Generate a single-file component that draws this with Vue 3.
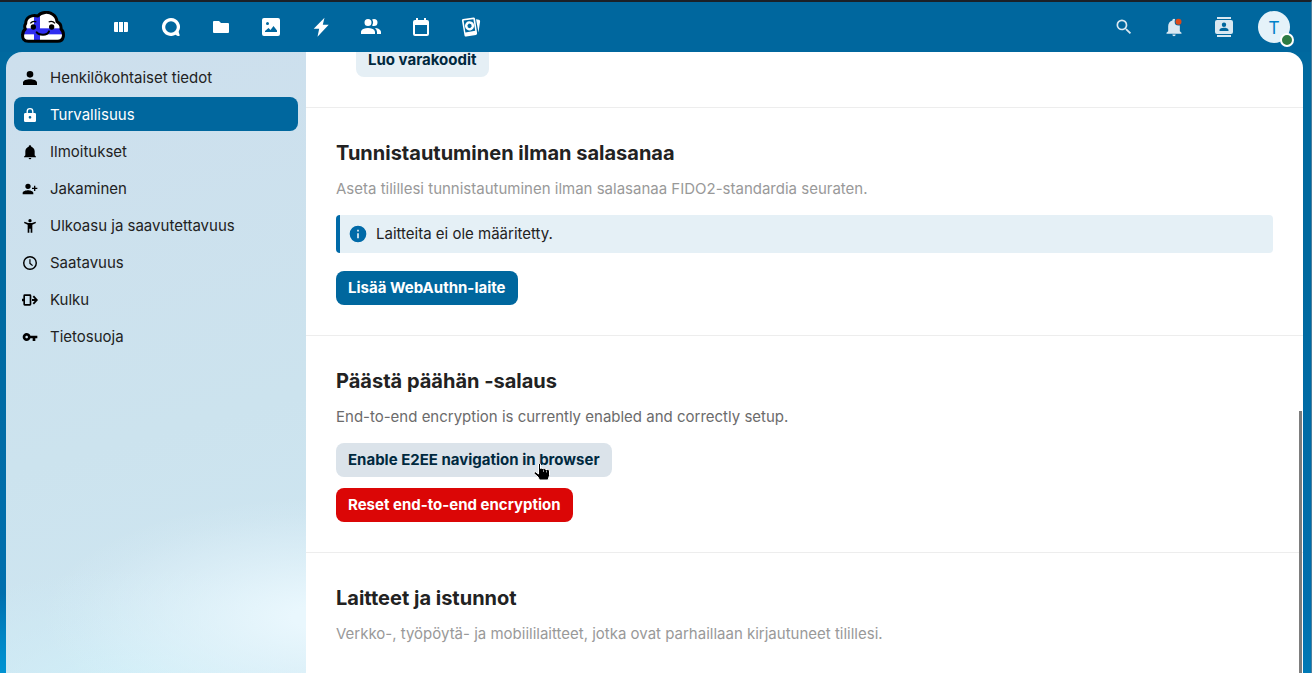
<template>
  <div class="page">
    <header class="header">
      <a href="#" class="logo" aria-label="Etusivu">
        <svg viewBox="0 0 132 96" width="44" height="32">
          <defs>
            <clipPath id="cloud-clip"><path :d="cloud" /></clipPath>
          </defs>
          <g clip-path="url(#cloud-clip)">
            <rect width="132" height="96" fill="#fff" />
            <rect x="39" width="18" height="96" fill="#2f2df0" />
            <rect y="52" width="132" height="18" fill="#2f2df0" />
          </g>
          <path :d="cloud" fill="none" stroke="#000" stroke-width="9" stroke-linejoin="round" />
          <circle cx="37" cy="48" r="8" />
          <circle cx="92" cy="48" r="8" />
          <path d="M28 37Q36 28 46 33M83 33Q94 28 102 37" fill="none" stroke="#000" stroke-width="4" />
          <path d="M47 64Q51 71 66 71Q80 71 84 61" fill="none" stroke="#000" stroke-width="6" stroke-linecap="round" />
        </svg>
      </a>

      <nav class="apps" aria-label="Sovellukset">
        <a v-for="app in apps" :key="app.name" href="#" class="app" :aria-label="app.name">
          <svg viewBox="0 0 24 24" width="24" height="24">
            <path :d="app.icon" fill="currentColor" fill-rule="evenodd" />
          </svg>
        </a>
      </nav>

      <div class="tools">
        <button class="tool" aria-label="Haku">
          <svg viewBox="0 0 24 24" width="20" height="20">
            <path fill="currentColor" d="M9.5,3A6.5,6.5 0 0,1 16,9.5C16,11.11 15.41,12.59 14.44,13.73L14.71,14H15.5L20.5,19L19,20.5L14,15.5V14.71L13.73,14.44C12.59,15.41 11.11,16 9.5,16A6.5,6.5 0 0,1 3,9.5A6.5,6.5 0 0,1 9.5,3M9.5,5C7,5 5,7 5,9.5C5,12 7,14 9.5,14C12,14 14,12 14,9.5C14,7 12,5 9.5,5Z" />
          </svg>
        </button>
        <button class="tool" aria-label="Ilmoitukset">
          <svg viewBox="0 0 24 24" width="20" height="20">
            <path fill="currentColor" :d="bell" />
            <circle cx="17.4" cy="5.6" r="4.6" fill="#00679e" />
            <circle cx="17.4" cy="5.6" r="3.6" fill="#dd4a1a" />
          </svg>
        </button>
        <button class="tool" aria-label="Yhteystiedot">
          <svg viewBox="0 0 24 24" width="24" height="24">
            <path fill="currentColor" fill-rule="evenodd" d="M5 2H19V4H5ZM5 20H19V22H5ZM5 5H19A2 2 0 0 1 21 7V17A2 2 0 0 1 19 19H5A2 2 0 0 1 3 17V7A2 2 0 0 1 5 5ZM12 7.5A2.2 2.2 0 1 0 12 11.9A2.2 2.2 0 1 0 12 7.5M7.5 16H16.5V15C16.5 13.4 13.5 12.7 12 12.7C10.5 12.7 7.5 13.4 7.5 15Z" />
          </svg>
        </button>
        <button class="tool" aria-label="Asetusvalikko">
          <span class="avatar">T<span class="status"></span></span>
        </button>
      </div>
    </header>

    <div class="content">
      <nav class="sidebar" aria-label="Asetukset">
        <ul>
          <li v-for="item in items" :key="item.label">
            <a href="#" class="entry" :class="{ active: item.label === current }" @click.prevent="current = item.label">
              <svg viewBox="0 0 24 24" width="16" height="16">
                <path :d="item.icon" fill="currentColor" fill-rule="evenodd" />
              </svg>
              <span>{{ item.label }}</span>
            </a>
          </li>
        </ul>
      </nav>

      <main class="settings">
        <section class="section section-codes">
          <button class="btn">Luo varakoodit</button>
        </section>

        <section class="section">
          <h2>Tunnistautuminen ilman salasanaa</h2>
          <p class="hint">Aseta tilillesi tunnistautuminen ilman salasanaa FIDO2-standardia seuraten.</p>
          <div class="note">
            <svg viewBox="0 0 24 24" width="20" height="20">
              <path fill="#006aa8" d="M13,9H11V7H13M13,17H11V11H13M12,2A10,10 0 0,0 2,12A10,10 0 0,0 12,22A10,10 0 0,0 22,12A10,10 0 0,0 12,2Z" />
            </svg>
            <span>Laitteita ei ole määritetty.</span>
          </div>
          <button class="btn btn-primary">Lisää WebAuthn-laite</button>
        </section>

        <section class="section">
          <h2>Päästä päähän -salaus</h2>
          <p>End-to-end encryption is currently enabled and correctly setup.</p>
          <div class="actions">
            <button class="btn btn-hovered">
              Enable E2EE navigation in browser
              <svg class="cursor" viewBox="0 0 18 20" width="18" height="20">
                <path
                  d="M5.5 2Q6.5.8 7.5 2V6.5Q9 5.5 10.2 6.8Q11.8 6 13 7.5Q15 6.8 16.5 8.5V13.5L15 18H6.5L5 15L1 11.5Q.8 9.8 2.5 9.8L5.5 12Z"
                  fill="#000" stroke="#fff" stroke-linejoin="round"
                />
                <path d="M10.5 8V10M13.5 8.5V10.5" stroke="#999" />
              </svg>
            </button>
            <button class="btn btn-error">Reset end-to-end encryption</button>
          </div>
        </section>

        <section class="section">
          <h2>Laitteet ja istunnot</h2>
          <p class="hint">Verkko-, työpöytä- ja mobiililaitteet, jotka ovat parhaillaan kirjautuneet tilillesi.</p>
        </section>
        <div class="scroll-thumb"></div>
      </main>
    </div>
  </div>
</template>

<script setup>
import { ref } from 'vue';

const current = ref('Turvallisuus');

const cloud = 'M22 91C8 91 4 82 5 72C5 64 8 58 13 54C10 48 11 42 14 38C14 20 32 9 51 15C60 2 84 1 95 10C103 15 107 23 108 32C118 37 121 46 120 54C127 60 128 70 127 77C125 87 117 91 110 91Z';
const bell = 'M21,19V20H3V19L5,17V11C5,7.9 7.03,5.17 10,4.29C10,4.19 10,4.1 10,4A2,2 0 0,1 12,2A2,2 0 0,1 14,4C14,4.1 14,4.19 14,4.29C16.97,5.17 19,7.9 19,11V17L21,19M14,21A2,2 0 0,1 12,23A2,2 0 0,1 10,21';

const apps = [
  { name: 'Kojelauta', icon: 'M6 7H9V17H6A1 1 0 0 1 5 16V8A1 1 0 0 1 6 7ZM10 7H14V17H10ZM15 7H18A1 1 0 0 1 19 8V16A1 1 0 0 1 18 17H15Z' },
  { name: 'Talk', icon: 'M12 3A9 9 0 1 0 16.6 19.7C17.8 20.6 19.6 21.2 20.6 20.8C21.2 20.4 19.8 18.6 19.7 16.6A9 9 0 0 0 12 3ZM12 6.2A5.8 5.8 0 1 1 12 17.8A5.8 5.8 0 1 1 12 6.2Z' },
  { name: 'Tiedostot', icon: 'M5 6H10L12 8H19A1 1 0 0 1 20 9V17A1 1 0 0 1 19 18H5A1 1 0 0 1 4 17V7A1 1 0 0 1 5 6Z' },
  { name: 'Kuvat', icon: 'M5 3H19A2 2 0 0 1 21 5V19A2 2 0 0 1 19 21H5A2 2 0 0 1 3 19V5A2 2 0 0 1 5 3ZM8.5 7A1.5 1.5 0 1 0 8.5 10A1.5 1.5 0 1 0 8.5 7M6 17H18V15.5L14.5 11L11.5 15L9.5 13L6 16Z' },
  { name: 'Aktiviteetti', icon: 'M15.5 2.7L4.7 13.7H10.2L8.5 21.7L19.7 9.8H13.8Z' },
  { name: 'Yhteystiedot', icon: 'M16 17V19H2V17S2 13 9 13 16 17 16 17M12.5 7.5A3.5 3.5 0 1 0 9 11A3.5 3.5 0 0 0 12.5 7.5M15.94 13A5.32 5.32 0 0 1 18 17V19H22V17S22 13.37 15.94 13M15 4A3.39 3.39 0 0 0 13.07 4.59A5 5 0 0 1 13.07 10.41A3.39 3.39 0 0 0 15 11A3.5 3.5 0 0 0 15 4Z' },
  { name: 'Kalenteri', icon: 'M7 3H9V5H15V3H17V5H18A2 2 0 0 1 20 7V19A2 2 0 0 1 18 21H6A2 2 0 0 1 4 19V7A2 2 0 0 1 6 5H7ZM6 10V19H18V10Z' },
  { name: 'Muistot', icon: 'M4 4L14.5 2.4Q15.7 2.3 16 3.5L18.1 18.3Q18.2 19.6 17 19.9L7.2 21.6Q5.8 21.7 5.5 20.4L2.9 5.6Q2.8 4.2 4 4ZM4.6 5.6L6.4 17.4L16.2 15.8L14.4 4.2ZM9.8 6.3A4.6 4.6 0 1 1 11.3 15.4A4.6 4.6 0 1 1 9.8 6.3ZM10 8.4L8.4 10.2L8.9 12.4L11 13.2L12.7 11.5L12.2 9.2ZM17 4.2L20 4.8Q21.4 5.2 21.1 6.5L19.5 17.4Z' },
];

const items = [
  { label: 'Henkilökohtaiset tiedot', icon: 'M12 1.5A5 5 0 1 1 12 11.5A5 5 0 1 1 12 1.5M12 14C17 14 22.5 15.8 22.5 19V22.5H1.5V19C1.5 15.8 7 14 12 14Z' },
  { label: 'Turvallisuus', icon: 'M12 1.5A5.2 5.2 0 0 1 17.2 6.7V9H19A2 2 0 0 1 21 11V20.5A2 2 0 0 1 19 22.5H5A2 2 0 0 1 3 20.5V11A2 2 0 0 1 5 9H6.8V6.7A5.2 5.2 0 0 1 12 1.5M12 3.5A3.2 3.2 0 0 0 8.8 6.7V9H15.2V6.7A3.2 3.2 0 0 0 12 3.5M12 13.5A2 2 0 1 0 12 17.5A2 2 0 1 0 12 13.5' },
  { label: 'Ilmoitukset', icon: bell },
  { label: 'Jakaminen', icon: 'M9 14C11.67 14 17 15.33 17 18V20H1V18C1 15.33 6.33 14 9 14M18 7H20V10H23V12H20V15H18V12H15V10H18ZM9 4A4 4 0 1 1 9 12A4 4 0 1 1 9 4' },
  { label: 'Ulkoasu ja saavutettavuus', icon: 'M12 1.5A2.5 2.5 0 1 1 12 6.5A2.5 2.5 0 1 1 12 1.5M3.8 5.5L9 7.5H15L20.2 5.5L21 7.4L15.5 10V22H13V16H11V22H8.5V10L3 7.4Z' },
  { label: 'Saatavuus', icon: 'M12 1.5A10.5 10.5 0 1 1 12 22.5A10.5 10.5 0 1 1 12 1.5M12 3.7A8.3 8.3 0 1 0 12 20.3A8.3 8.3 0 1 0 12 3.7M11 6.5H12.8V12L16.5 15.2L15.3 16.6L11 13Z' },
  { label: 'Kulku', icon: 'M4 3.5H12A2 2 0 0 1 14 5.5V18.5A2 2 0 0 1 12 20.5H4A2 2 0 0 1 2 18.5V14H0V10H2V5.5A2 2 0 0 1 4 3.5M4.5 6V18H11.5V6ZM15 10.5H19L16 7.2L18 5.2L24 12L18 18.8L16 16.8L19 13.5H15Z' },
  { label: 'Tietosuoja', icon: 'M7 14C5.9 14 5 13.1 5 12S5.9 10 7 10 9 10.9 9 12 8.1 14 7 14M12.6 10C11.8 7.7 9.6 6 7 6C3.7 6 1 8.7 1 12S3.7 18 7 18C9.6 18 11.8 16.3 12.6 14H16V18H20V14H23V10H12.6Z' },
];
</script>

<style>
body {
  margin: 0;
  overflow: hidden;
}
</style>

<style scoped>
.page {
  box-sizing: border-box;
  height: 100vh;
  display: flex;
  flex-direction: column;
  border-top: 2px solid #1b2027;
  border-right: 1px solid #4b7f9e;
  background:
    radial-gradient(ellipse 100px 80px at 0 100%, #0093d3, rgba(0, 147, 211, 0)),
    linear-gradient(180deg, #00699f 0, #00699f 40%, #006fae 90%, #0079b5 100%);
  color: #222;
  font-family: Inter, "Noto Sans", sans-serif;
  font-size: 15px;
  line-height: 24px;
}

/* 顶部栏 */
.header {
  display: flex;
  align-items: center;
  height: 50px;
  flex-shrink: 0;
  padding: 0 12px 0 20px;
  background: #00679e;
}

.logo {
  display: flex;
  width: 76px;
  padding-left: 1px;
  box-sizing: border-box;
}

.apps,
.tools {
  display: flex;
}

.tools {
  margin-left: auto;
}

.app,
.tool {
  display: flex;
  align-items: center;
  justify-content: center;
  width: 50px;
  height: 50px;
  padding: 0;
  border: none;
  background: none;
  color: #fff;
  font: inherit;
  cursor: pointer;
}

.tool {
  color: #d9e8f1;
}

.avatar {
  position: relative;
  width: 32px;
  height: 32px;
  border-radius: 50%;
  background: #e5f2f9;
  color: #0082c9;
  font-family: "Noto Sans", sans-serif;
  font-size: 18px;
  line-height: 32px;
  text-align: center;
}

.status {
  position: absolute;
  right: -4px;
  bottom: -4px;
  width: 10px;
  height: 10px;
  border: 2px solid #fff;
  border-radius: 50%;
  background: #2d7b43;
}

.content {
  flex: 1;
  min-height: 0;
  display: flex;
  margin: 0 8px 0 6px;
  border-radius: 16px 16px 0 0;
  overflow: hidden;
}

/* 侧边导航 */
.sidebar {
  box-sizing: border-box;
  width: 300px;
  flex-shrink: 0;
  padding: 8px;
  background:
    radial-gradient(ellipse 280px 120px at 105% 91%, #e9f7fd 10%, rgba(233, 247, 253, 0.5) 50%, rgba(233, 247, 253, 0.1) 85%, rgba(233, 247, 253, 0) 100%),
    radial-gradient(ellipse 280px 130px at 45% 104%, #d1eff8 10%, rgba(209, 239, 248, 0.4) 55%, rgba(209, 239, 248, 0) 100%),
    linear-gradient(165deg, #cddfed 0, #cce3ee 60%, #cee6f2 100%);
}

.sidebar ul {
  display: flex;
  flex-direction: column;
  gap: 3px;
  margin: 0;
  padding: 0;
  list-style: none;
}

.entry {
  box-sizing: border-box;
  display: flex;
  align-items: center;
  gap: 12px;
  height: 34px;
  padding: 2px 8px 0;
  border-radius: 8px;
  color: #222;
  text-decoration: none;
}

.entry svg {
  color: #000;
}

.entry.active,
.entry.active svg {
  color: #fff;
}

.entry.active {
  background: #00679e;
}

/* 设置内容 */
.settings {
  position: relative;
  flex: 1;
  min-width: 0;
  overflow: hidden;
  background: #fff;
}

.section {
  padding: 30px;
  border-bottom: 1px solid #ededed;
}

.section:last-of-type {
  border-bottom: none;
}

.section-codes {
  margin-top: -9px;
  padding: 0 50px 30px;
}

h2 {
  margin: 0 0 9px;
  font-size: 20px;
  font-weight: 700;
  line-height: 30px;
}

p {
  margin: 0 0 14px;
  color: #6b6b6b;
}

.hint {
  color: #999;
}

.note {
  display: flex;
  align-items: center;
  gap: 8px;
  height: 38px;
  margin-bottom: 18px;
  padding: 0 8px;
  border-left: 4px solid #006aa8;
  border-radius: 4px;
  background: #e5f0f6;
}

.btn {
  position: relative;
  display: block;
  height: 34px;
  padding: 0 12px;
  border: none;
  border-radius: 8px;
  background: #e5eff5;
  color: #00293f;
  font: inherit;
  font-weight: 700;
  cursor: pointer;
}

.btn-primary {
  background: #00679e;
  color: #fff;
}

.btn-hovered {
  background: #dbe3ea;
}

.btn-error {
  background: #db0606;
  color: #fff;
}

.actions {
  display: flex;
  flex-direction: column;
  align-items: flex-start;
  gap: 11px;
}

.cursor {
  position: absolute;
  left: 197px;
  top: 19px;
}

.scroll-thumb {
  position: absolute;
  right: 1px;
  top: 359px;
  bottom: 0;
  width: 3px;
  background: #7d7d7d;
}
</style>
